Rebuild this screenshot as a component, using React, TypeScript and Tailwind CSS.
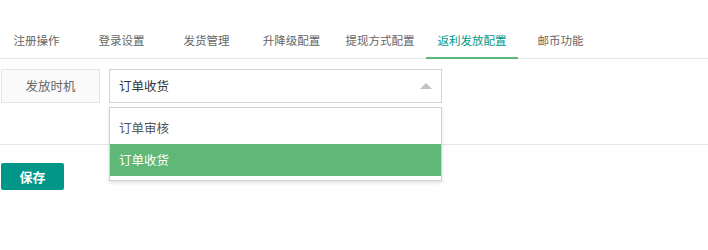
import React, { useState } from "react";

const tabs = [
  "注册操作",
  "登录设置",
  "发货管理",
  "升降级配置",
  "提现方式配置",
  "返利发放配置",
  "邮币功能",
];

const options = ["订单审核", "订单收货"];

function App() {
  const [activeTab] = useState(5);
  const [value, setValue] = useState("订单收货");

  return (
    <div
      className="w-full min-h-[250px] bg-white overflow-hidden pt-[21px]"
      style={{ fontFamily: '"Noto Sans CJK SC", "Noto Sans", sans-serif' }}
    >
      {/* tab header */}
      <ul className="flex h-[38px] ml-[-6px] border-b border-[#e6e6e6]">
        {tabs.map((t, i) => (
          <li
            key={t}
            className={
              i === activeTab
                ? "min-w-[85px] px-[11.5px] text-center text-[11.5px] leading-[38px] text-[#009688] border-b-2 border-[#5fb878] h-[38px] cursor-pointer"
                : "min-w-[85px] px-[11.5px] text-center text-[11.5px] leading-[38px] text-[#666] cursor-pointer"
            }
          >
            {t}
          </li>
        ))}
      </ul>

      {/* form */}
      <div className="pt-[10px]">
        <div className="flex pl-[1px]">
          <div className="w-[99px] h-[34px] flex items-center justify-center bg-[#fafafa] border border-[#e6e6e6] text-[12.5px] text-[#666]">
            发放时机
          </div>
          <div className="relative ml-[9px] w-[333px]">
            <div className="h-[34px] flex items-center justify-between border border-[#d2d2d2] pl-[9px] pr-[8px] bg-white cursor-pointer">
              <span className="text-[12.5px] text-[#333]">{value}</span>
              <span className="w-0 h-0 border-l-[6px] border-r-[6px] border-b-[6px] border-l-transparent border-r-transparent border-b-[#c2c2c2] mr-[1px]"></span>
            </div>
            {/* open dropdown */}
            <dl className="absolute left-0 top-[38px] z-10 w-[333px] bg-white border border-[#d2d2d2] shadow-[0_2px_4px_rgba(0,0,0,0.12)] py-[4px]">
              {options.map((o) => (
                <dd
                  key={o}
                  onClick={() => setValue(o)}
                  className={
                    o === value
                      ? "h-[32px] leading-[32px] pl-[9px] text-[12.5px] bg-[#5fb878] text-white cursor-pointer"
                      : "h-[32px] leading-[32px] pl-[9px] text-[12.5px] text-[#555] cursor-pointer"
                  }
                >
                  {o}
                </dd>
              ))}
            </dl>
          </div>
        </div>

        <div className="mt-[41px] border-t border-[#e6e6e6] pt-[18px] pl-[1px]">
          <button className="w-[63px] h-[27px] bg-[#009688] text-white text-[13px] font-bold rounded-[2px]">
            保存
          </button>
        </div>
      </div>
    </div>
  );
}

export default App;
